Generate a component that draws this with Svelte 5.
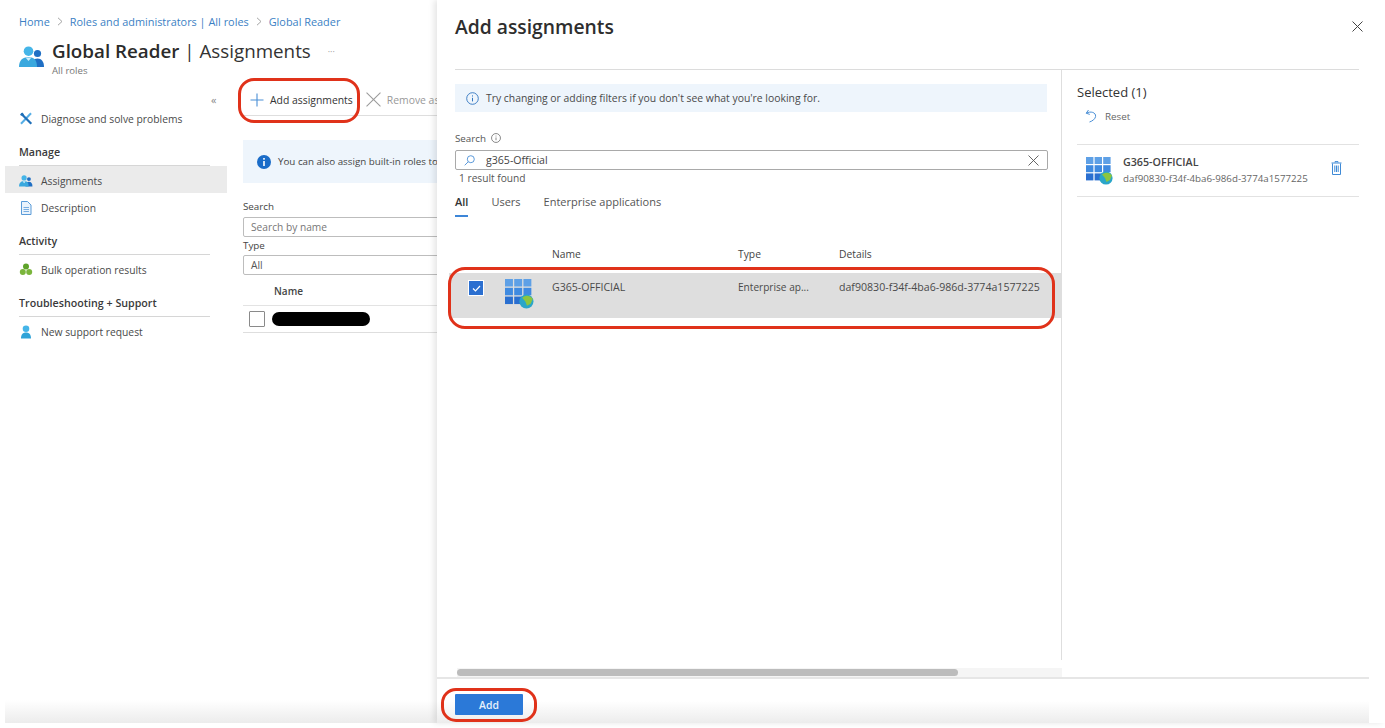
<script lang="ts">
    const crumbs = ["Home", "Roles and administrators | All roles", "Global Reader"];
    const detailsId = "daf90830-f34f-4ba6-986d-3774a1577225";
</script>

{#snippet appIcon(size)}
    <svg class="appicon" width={size} height={size} viewBox="0 0 28 28">
        <rect x="0" y="0" width="7.4" height="7" fill="#5ea0e6" />
        <rect x="8.6" y="0" width="7.4" height="7" fill="#5ea0e6" />
        <rect x="17.2" y="0" width="7.4" height="7" fill="#5ea0e6" />
        <rect x="0" y="8.2" width="7.4" height="7" fill="#3f8ae0" />
        <rect x="8.6" y="8.2" width="7.4" height="7" fill="#3f8ae0" />
        <rect x="17.2" y="8.2" width="7.4" height="7" fill="#3f8ae0" />
        <rect x="0" y="16.4" width="7.4" height="7" fill="#2a6fd0" />
        <rect x="8.6" y="16.4" width="7.4" height="7" fill="#2a6fd0" />
        <circle cx="20" cy="21" r="6.6" fill="#2aa6c9" />
        <path d="M16 17.5 A6.6 6.6 0 0 1 26 18.5 L24 23 L20.5 25 L19 21 Z" fill="#8cc63f" />
    </svg>
{/snippet}

{#snippet people(w, h)}
    <svg width={w} height={h} viewBox="0 0 26 22">
        <circle cx="18.5" cy="7.5" r="3.6" fill="#1f6fc4" />
        <path d="M12 21c0-5.5 2.5-8.500 6.500-8.500S25 15.500 25 21z" fill="#1f6fc4" />
        <circle cx="9.5" cy="5.2" r="4.800" fill="#45b5e8" />
        <path d="M0 21c0-6.500 3.500-10 9.500-10S18 14.500 18 21z" fill="#3aa8de" />
        <path d="M6.500 11.400 9.500 15l3-3.600z" fill="#cfeefb" />
    </svg>
{/snippet}

<main class="page">
    <section class="blade">
        <nav class="crumbs">
            {#each crumbs as c, i}
                {#if i > 0}
                    <svg class="chev" width="6" height="9" viewBox="0 0 6 9"><path d="M1 .8 5 4.5 1 8.2" fill="none" stroke="#9a9a9a" stroke-width=".9" /></svg>
                {/if}
                <span>{c}</span>
            {/each}
        </nav>
        <header class="title">
            {@render people(26, 22)}
            <div>
                <h1><b>Global Reader</b> | Assignments <span class="more">···</span></h1>
                <p>All roles</p>
            </div>
        </header>
        <div class="columns">
            <aside class="side">
                <div class="collapse">«</div>
                <div class="item first">
                    <svg width="13" height="13" viewBox="0 0 13 13">
                        <path d="M11.500 1.200 1.500 11.800" stroke="#55aee6" stroke-width="2" fill="none" />
                        <path d="M1.500 1.500 11.800 11.800" stroke="#1f6fb8" stroke-width="2.200" fill="none" />
                        <path d="M.5 3 3 .5l1.500 2-1.500 1.500z" fill="#1f6fb8" />
                    </svg>
                    Diagnose and solve problems
                </div>
                <h3>Manage</h3>
                <div class="item active">
                    {@render people(14, 12)}
                    Assignments
                </div>
                <div class="item">
                    <svg width="13" height="14" viewBox="0 0 13 14"><path d="M2 .5h6l3.500 3.500v9.500H2z" fill="#eaf3fc" stroke="#5a9bd8" /><path d="M4 6.500h5.500M4 8.500h5.500M4 10.500h5.500" stroke="#5a9bd8" stroke-width=".8" /></svg>
                    Description
                </div>
                <h3>Activity</h3>
                <div class="item">
                    <svg width="13" height="13" viewBox="0 0 13 13"><circle cx="6.500" cy="3.500" r="3" fill="#5ea32a" /><circle cx="3.300" cy="9" r="3" fill="#7ab53b" /><circle cx="9.700" cy="9" r="3" fill="#7ab53b" /></svg>
                    Bulk operation results
                </div>
                <h3>Troubleshooting + Support</h3>
                <div class="item">
                    <svg width="13" height="14" viewBox="0 0 13 14"><circle cx="6.500" cy="3.800" r="3.300" fill="#45b5e8" /><path d="M1.500 13.500c0-4 1.800-6 5-6s5 2 5 6z" fill="#2fa3d8" /></svg>
                    New support request
                </div>
            </aside>
            <div class="content">
                <div class="toolbar">
                    <span class="cmd">
                        <svg width="14" height="14" viewBox="0 0 14 14"><path d="M7 .5v13M.5 7h13" stroke="#4a8fd6" stroke-width="1.100" /></svg>
                        Add assignments
                    </span>
                    <span class="cmd off">
                        <svg width="14" height="14" viewBox="0 0 14 14"><path d="M.5.5l13 13M13.500.5l-13 13" stroke="#9b9b9b" stroke-width="1" /></svg>
                        Remove assignments
                    </span>
                </div>
                <div class="notice">
                    <svg width="14" height="14" viewBox="0 0 14 14"><circle cx="7" cy="7" r="7" fill="#1a6cc8" /><rect x="6.200" y="6" width="1.600" height="5" fill="#fff" /><rect x="6.200" y="3" width="1.600" height="1.700" fill="#fff" /></svg>
                    <span>You can also assign built-in roles to groups</span>
                </div>
                <label class="lbl search-lbl" for="role-search">Search</label>
                <input id="role-search" class="field" placeholder="Search by name" />
                <div class="lbl type-lbl">Type</div>
                <div class="field select">All</div>
                <div class="th">Name</div>
                <div class="tr">
                    <span class="box"></span>
                    <span class="redacted"></span>
                </div>
            </div>
        </div>
    </section>

    <div class="fade"></div>

    <section class="panel">
        <div class="panel-head">
            <h2>Add assignments</h2>
            <svg class="close" width="11" height="11" viewBox="0 0 11 11"><path d="M.5.5l10 10M10.500.5l-10 10" stroke="#444" stroke-width="1" /></svg>
        </div>
        <div class="panel-body">
            <div class="picker">
                <div class="picker-main">
                    <div class="hint">
                        <svg width="13" height="13" viewBox="0 0 13 13"><circle cx="6.500" cy="6.500" r="5.800" fill="none" stroke="#2f74c0" stroke-width=".9" /><path d="M6.500 5.800v3.600M6.500 3.400v1.100" stroke="#2f74c0" stroke-width="1" /></svg>
                        Try changing or adding filters if you don't see what you're looking for.
                    </div>
                    <div class="search-label">
                        Search
                        <svg width="10" height="10" viewBox="0 0 13 13"><circle cx="6.500" cy="6.500" r="5.800" fill="none" stroke="#666" stroke-width="1" /><path d="M6.500 5.800v3.600M6.500 3.400v1.100" stroke="#666" stroke-width="1" /></svg>
                    </div>
                    <div class="searchbox">
                        <svg width="11" height="11" viewBox="0 0 11 11"><circle cx="6.800" cy="4.200" r="3.500" fill="none" stroke="#4a8fd6" stroke-width=".9" /><path d="M4.200 6.800.7 10.300" stroke="#4a8fd6" stroke-width=".9" /></svg>
                        <span class="query">g365-Official</span>
                        <svg class="clear" width="11" height="11" viewBox="0 0 11 11"><path d="M.5.500l10 10M10.500.500l-10 10" stroke="#555" stroke-width=".9" /></svg>
                    </div>
                    <div class="found">1 result found</div>
                    <div class="tabs">
                        <span class="tab on">All</span>
                        <span class="tab">Users</span>
                        <span class="tab">Enterprise applications</span>
                    </div>
                    <div class="grid-head">
                        <span>Name</span><span>Type</span><span>Details</span>
                    </div>
                    <div class="grid-row">
                        <span class="check"><svg width="9" height="7" viewBox="0 0 9 7"><path d="M1 3.500 3.500 6 8 1" fill="none" stroke="#fff" stroke-width="1.200" /></svg></span>
                        {@render appIcon(30)}
                        <span class="c-name">G365-OFFICIAL</span>
                        <span class="c-type">Enterprise ap...</span>
                        <span class="c-id">{detailsId}</span>
                    </div>
                </div>
                <div class="scrolltrack"><div class="scrollthumb"></div></div>
            </div>
            <aside class="selected">
                <h4>Selected (1)</h4>
                <div class="reset">
                    <svg width="12" height="14" viewBox="0 0 12 14"><path d="M3.500 1 1.200 4.200l3.600 1.200M1.400 4.200C5.500 1.800 11 3.400 10.600 7.400 10.300 10 7.500 12 4.500 13" fill="none" stroke="#4a8fd6" stroke-width="1" /></svg>
                    Reset
                </div>
                <div class="sel-row">
                    {@render appIcon(28)}
                    <div class="sel-text">
                        <strong>G365-OFFICIAL</strong>
                        <span>{detailsId}</span>
                    </div>
                    <svg class="trash" width="11" height="14" viewBox="0 0 11 14"><path d="M4 1.500V.6h3v.9M.5 2h10M1.500 2.500v11h8v-11" fill="none" stroke="#3f8ad6" stroke-width="1" /><path d="M3.800 4.500v6.500M5.500 4.500v6.500M7.200 4.500v6.500" stroke="#3f8ad6" stroke-width="1" /></svg>
                </div>
            </aside>
        </div>
        <footer class="panel-foot">
            <button>Add</button>
        </footer>
    </section>

    <div class="ring ring-cmd"></div>
    <div class="ring ring-row"></div>
    <div class="ring ring-add"></div>
</main>

<style>
    :global(body) {
        margin: 0;
        background: #fff;
    }

    .page {
        position: relative;
        width: 1385px;
        height: 728px;
        overflow: hidden;
        background: #fff;
        font-family: "Open Sans", "Noto Sans", sans-serif;
        font-size: 10.400px;
        color: #444;
    }

    .blade {
        width: 437px;
        overflow: hidden;
    }

    .crumbs {
        display: flex;
        align-items: center;
        gap: 7px;
        padding: 14px 0 0 19px;
        height: 15px;
        font-size: 10.900px;
        color: #3b7fc4;
        white-space: nowrap;
    }

    .title {
        display: flex;
        gap: 7px;
        padding: 10px 0 0 19px;
        height: 45px;
    }

    .title > svg {
        margin-top: 7px;
    }

    h1 {
        margin: 0;
        font-size: 18.800px;
        line-height: 25px;
        font-weight: 400;
        color: #333;
        white-space: nowrap;
    }

    h1 b {
        font-weight: 600;
        color: #2b2b2b;
    }

    .more {
        font-size: 9px;
        color: #999;
        margin-left: 12px;
        vertical-align: 3px;
    }

    .title p {
        margin: 0;
        font-size: 9.600px;
        line-height: 13px;
        color: #777;
    }

    .columns {
        display: flex;
    }

    .side {
        position: relative;
        width: 227px;
        flex: none;
        padding-left: 5px;
        box-sizing: border-box;
    }

    .collapse {
        position: absolute;
        top: 8px;
        left: 211px;
        font-size: 11px;
        color: #888;
    }

    .item {
        display: flex;
        align-items: center;
        gap: 8px;
        box-sizing: border-box;
        height: 27px;
        padding: 2px 0 0 14px;
        color: #4a4a4a;
        font-size: 10.300px;
    }

    .item svg {
        width: 14px;
        flex: none;
    }

    .item.first {
        margin-top: 20px;
    }

    .item.active {
        background: #ebebeb;
    }

    h3 {
        margin: 0 17px 0 14px;
        padding: 14px 0 6px;
        font-size: 10.700px;
        line-height: 14px;
        font-weight: 600;
        color: #3a3a3a;
        border-bottom: 1px solid #d6d6d6;
    }

    .content {
        flex: 1;
        min-width: 0;
        padding-left: 16px;
    }

    .toolbar {
        display: flex;
        gap: 13px;
        height: 31px;
        padding-left: 7px;
        align-items: center;
        border-bottom: 1px solid #dedede;
        white-space: nowrap;
    }

    .cmd {
        display: flex;
        align-items: center;
        gap: 6px;
        color: #333;
    }

    .cmd.off {
        color: #999;
    }

    .cmd.off svg {
        width: 15px;
        height: 15px;
    }

    .notice {
        display: flex;
        align-items: center;
        gap: 7px;
        height: 43px;
        margin-top: 24px;
        padding-left: 14px;
        background: #eef5fc;
        font-size: 9.800px;
        white-space: nowrap;
    }

    .notice svg {
        flex: none;
    }

    .lbl {
        display: block;
        font-size: 9.800px;
        line-height: 13px;
        color: #444;
    }

    .search-lbl {
        margin-top: 17px;
    }

    .type-lbl {
        margin-top: 2px;
    }

    .field {
        display: block;
        box-sizing: border-box;
        width: 220px;
        height: 20px;
        margin: 3px 0 0;
        padding: 0 7px;
        border: 1px solid #bdbdbd;
        border-radius: 2px;
        font: 10.200px/18px "Open Sans", "Noto Sans", sans-serif;
        color: #555;
        outline: none;
    }

    #role-search {
        margin-top: 4px;
    }

    .field::placeholder {
        color: #777;
        opacity: 1;
    }

    .th {
        height: 30px;
        line-height: 32px;
        padding-left: 31px;
        font-weight: 600;
        font-size: 10px;
        color: #444;
        border-bottom: 1px solid #e3e3e3;
    }

    .tr {
        display: flex;
        align-items: center;
        gap: 7px;
        height: 26px;
        padding-left: 6px;
        border-bottom: 1px solid #dedede;
    }

    .box {
        width: 14px;
        height: 14px;
        border: 1px solid #8a8a8a;
        border-radius: 1px;
    }

    .redacted {
        width: 98px;
        height: 14px;
        border-radius: 7px;
        background: #000;
    }

    .fade {
        position: absolute;
        left: 5px;
        top: 700px;
        width: 432px;
        height: 23px;
        background: linear-gradient(#fff, #ececec);
    }

    .panel {
        position: absolute;
        left: 437px;
        top: 0;
        width: 948px;
        height: 723px;
        display: flex;
        flex-direction: column;
        background: #fff;
        box-shadow: -3px 0 6px rgba(0, 0, 0, 0.1);
    }

    .panel-head {
        display: flex;
        justify-content: space-between;
        align-items: flex-start;
        height: 70px;
        margin: 0 26px 0 18px;
        box-sizing: border-box;
        padding-top: 14px;
        border-bottom: 1px solid #dcdcdc;
    }

    h2 {
        margin: 0;
        font-size: 19.300px;
        line-height: 26px;
        font-weight: 600;
        color: #2e2e2e;
    }

    .close {
        margin: 7px -4px 0 0;
    }

    .panel-body {
        flex: 1;
        display: flex;
        min-height: 0;
    }

    .picker {
        display: flex;
        flex-direction: column;
        width: 625px;
        flex: none;
    }

    .picker-main {
        flex: 1;
        min-height: 0;
        border-right: 1px solid #dedede;
    }

    .hint {
        display: flex;
        align-items: center;
        gap: 8px;
        height: 28px;
        margin: 14px 14px 0 18px;
        padding-left: 11px;
        background: #eef5fc;
        font-size: 10.400px;
        color: #4a4a4a;
    }

    .hint svg {
        margin-right: -1px;
    }

    .search-label {
        display: flex;
        align-items: center;
        gap: 5px;
        margin: 19px 0 0 18px;
        height: 14px;
        font-size: 9.800px;
        color: #555;
    }

    .searchbox {
        display: flex;
        align-items: center;
        height: 20px;
        box-sizing: border-box;
        margin: 5px 13px 0 18px;
        padding: 0 8px;
        border: 1px solid #a9a9a9;
        border-radius: 2px;
    }

    .query {
        margin-left: 11px;
        flex: 1;
        font-size: 10.600px;
        color: #444;
    }

    .found {
        margin: 1px 0 0 22px;
        line-height: 14px;
        font-size: 10.200px;
        color: #555;
    }

    .tabs {
        display: flex;
        gap: 23px;
        margin: 7px 0 0 18px;
        height: 25px;
        font-size: 11px;
        color: #555;
    }

    .tab {
        line-height: 19px;
    }

    .tab.on {
        position: relative;
        font-weight: 600;
        color: #333;
    }

    .tab.on::after {
        content: "";
        position: absolute;
        left: 0;
        right: 0;
        bottom: 0;
        height: 2px;
        background: #3d86d8;
    }

    .grid-head {
        display: grid;
        grid-template-columns: 186px 101px 1fr;
        margin-top: 27px;
        padding-left: 115px;
        height: 29px;
        line-height: 20px;
        font-size: 10.300px;
        font-weight: 500;
        color: #444;
    }

    .grid-row {
        display: flex;
        height: 45px;
        margin-left: 12px;
        background: #dedede;
        font-size: 10.600px;
        color: #4a4a4a;
        line-height: 28px;
        white-space: nowrap;
    }

    .check {
        flex: none;
        box-sizing: border-box;
        display: flex;
        align-items: center;
        justify-content: center;
        width: 16px;
        height: 16px;
        margin: 7px 21px 0 19px;
        background: #2b6fd0;
        border: 1px solid #fff;
    }

    .appicon {
        flex: none;
    }

    .grid-row .appicon {
        margin: 6px 17px 0 0;
    }

    .c-name {
        width: 186px;
    }

    .c-type {
        width: 101px;
        font-size: 10.100px;
    }

    .scrolltrack {
        height: 9px;
        margin: 8px 0 0 20px;
        padding-top: 1px;
        box-sizing: border-box;
        background: #f5f5f5;
    }

    .scrollthumb {
        width: 501px;
        height: 7px;
        border-radius: 4px;
        background: #bcbcbc;
    }

    .selected {
        flex: 1;
        margin: 0 26px 0 15px;
        min-width: 0;
    }

    h4 {
        margin: 14px 0 0;
        font-size: 13px;
        line-height: 17px;
        font-weight: 500;
        color: #333;
    }

    .reset {
        display: flex;
        align-items: center;
        gap: 8px;
        height: 20px;
        margin: 5px 0 0 8px;
        font-size: 9.800px;
        color: #666;
    }

    .sel-row {
        display: flex;
        align-items: center;
        height: 51px;
        margin-top: 18px;
        padding-left: 9px;
        border-top: 1px solid #e2e2e2;
        border-bottom: 1px solid #e2e2e2;
    }

    .sel-text {
        flex: 1;
        display: flex;
        flex-direction: column;
        margin: 0 0 1px 9px;
        white-space: nowrap;
    }

    .sel-text strong {
        font-size: 10.700px;
        line-height: 17px;
        font-weight: 600;
        color: #444;
    }

    .sel-text span {
        font-size: 9.750px;
        line-height: 15px;
        color: #666;
    }

    .trash {
        margin: 0 17px 6px 0;
    }

    .panel-foot {
        flex: none;
        height: 46px;
        box-sizing: border-box;
        margin-right: 16px;
        padding: 15px 0 0 18px;
        border-top: 2px solid #e6e6e6;
        background: linear-gradient(#fff 50%, #ececec);
    }

    button {
        display: block;
        width: 68px;
        height: 21px;
        border: none;
        border-radius: 1px;
        background: #2b79d8;
        color: #e8f1fb;
        font: 600 10.400px "Open Sans", sans-serif;
    }

    .ring {
        position: absolute;
        box-sizing: border-box;
        border: 3.500px solid #e0321a;
    }

    .ring-cmd {
        left: 238px;
        top: 78px;
        width: 122px;
        height: 45px;
        border-radius: 16px;
    }

    .ring-row {
        left: 448px;
        top: 267px;
        width: 607px;
        height: 62px;
        border-radius: 17px;
    }

    .ring-add {
        left: 441px;
        top: 688px;
        width: 96px;
        height: 34px;
        border-radius: 15px;
    }
</style>
